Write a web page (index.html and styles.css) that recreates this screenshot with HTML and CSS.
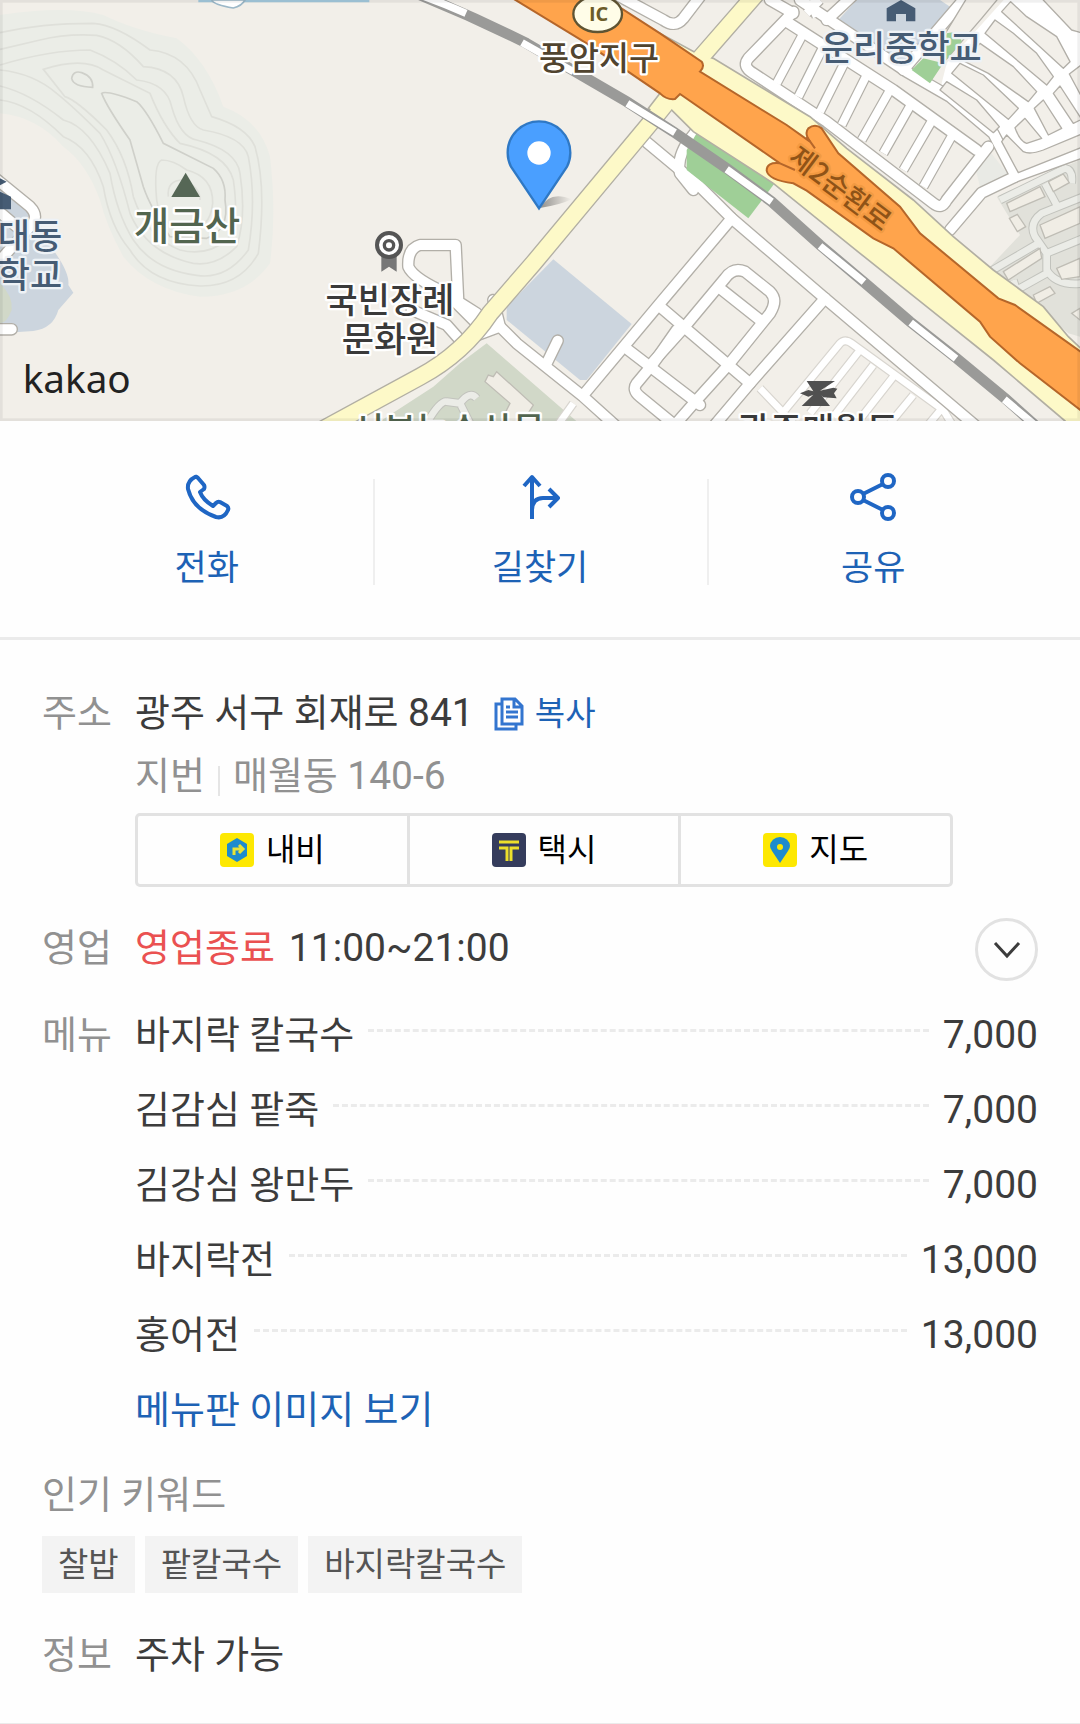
FILE: index.html
```html
<!DOCTYPE html>
<html lang="ko">
<head>
<meta charset="utf-8">
<meta name="viewport" content="width=device-width, initial-scale=1">
<title>장소 정보</title>
<link rel="stylesheet" href="styles.css">
</head>
<body>
<main class="place">
  <svg class="map" viewBox="0 0 3240 1263" preserveAspectRatio="xMidYMid slice" role="img" aria-label="지도">
    <defs>
      <linearGradient id="pin-shadow"><stop offset="0" stop-opacity=".4"/><stop offset="1" stop-opacity="0"/></linearGradient>
      <g id="main-roads">
        <path d="M-60 410L120 560L215 655L495 895L950 1280"/>
        <path d="M215 655L0 910L-230 1185"/>
        <path d="M-500 960L-430 1030L-230 1190L-130 1280"/>
        <path d="M495 895L270 1150L160 1280"/>
        <path d="M0 920L270 1150"/>
        <path d="M-20 1085L70 985L195 835Q220 800 255 815L330 875Q355 900 330 940L205 1095L110 1200L40 1280"/>
        <path d="M180 865L300 960"/>
        <path d="M-95 1050L120 1215"/>
        <path d="M50 990L-20 1090L-70 1150Q-85 1170 -60 1190L50 1280"/>
        <path d="M-340 1090L-307 1022"/>
        <path d="M100 570L60 520Q50 480 80 430L115 385"/>
        <path d="M-550 940L-605 905L-613 735L-720 735Q-758 745 -755 800Q-740 835 -640 880L-560 960L-530 970"/>
        <path d="M-745 930L-640 975L-600 1020"/>
        <path d="M-500 900L-480 980L-560 1010"/>
        <path d="M-120 -10L10 60Q45 85 70 55L120 -10"/>
        <path d="M420 0L740 215L870 290L1000 400L1065 525"/>
        <path d="M380 65L700 270L950 450"/>
        <path d="M400 35L265 175Q245 200 280 220L500 365L820 610Q845 630 860 600L985 440"/>
        <path d="M330 0L400 40"/>
        <path d="M500 60L575 -10"/>
        <path d="M730 210L910 0"/>
        <path d="M1065 530L965 578L870 690"/>
        <path d="M1065 530L1270 455"/>
      </g>
      <g id="side-roads">
        <path d="M430 100L350 250M490 140L415 290M555 185L480 335M620 225L545 375M690 270L605 420M755 310L670 460M820 355L730 510M880 400L790 560"/>
        <path d="M440 40L480 0M450 1L470 50"/>
      </g>
      <g id="lanes">
        <path d="M375 1230L540 1030Q555 1015 575 1030L850 1230L880 1280M600 1050L450 1240M640 1095L520 1250M700 1130L590 1270M760 1185L690 1270M300 1165L400 1270M850 1220L800 1280"/>
        <path d="M-260 1210L-310 1280"/>
      </g>
      <g id="estate-roads">
        <path d="M1020 600L1215 505Q1240 510 1235 550M1155 550L1190 615M1270 590L1145 640Q1105 670 1125 710L1160 760V810Q1190 860 1270 850M990 815L1135 730M1060 840L1070 870L1160 820M1160 760L1270 715"/>
        <path d="M-700 1270Q-660 1200 -640 1205L-600 1210Q-570 1170 -550 1195M-600 1210L-570 1270"/>
      </g>
    </defs>
    <rect class="ground" width="3240" height="1263"/>

    <!-- hill and its contour lines -->
    <path class="hill" d="M0 45Q200 15 310 45Q400 90 530 115Q620 180 670 320Q780 360 810 470Q830 640 810 790Q740 890 600 890Q450 870 370 770Q320 680 300 600Q260 490 190 440Q110 350 0 340Z"/>
    <g class="contour">
      <path d="M0 98Q120 70 280 70Q350 75 450 150Q560 160 600 270L635 350Q740 380 765 440Q800 560 775 760Q720 860 600 858Q450 850 390 750Q330 680 310 560Q270 440 190 410Q90 310 0 300"/>
      <path d="M0 148L120 120Q200 100 290 106Q360 120 430 200Q530 205 550 290Q570 380 610 390Q730 410 745 470Q770 600 745 750Q680 840 590 826Q460 810 400 720Q350 640 330 520Q270 380 190 360Q90 280 0 258"/>
      <path d="M0 195Q150 150 270 150Q350 180 410 240Q500 250 515 320Q540 410 590 420Q710 450 720 520Q740 650 710 740Q650 800 580 790Q440 760 390 640Q350 480 300 400Q220 320 170 280Q100 220 0 210"/>
      <path d="M130 208Q250 170 310 210L450 280Q490 380 540 430Q680 460 700 540Q720 680 680 720Q620 770 540 750Q440 710 400 590Q380 470 320 390Q230 300 195 290Z"/>
      <path class="contour-dark" d="M305 280Q320 270 410 305Q440 330 490 430L640 505Q680 540 675 600Q690 690 620 715L510 710Q450 620 430 560L390 420Q320 320 305 280ZM215 235Q220 210 245 218Q280 230 278 262Q220 260 215 235Z"/>
      <path d="M470 600Q460 490 485 480Q520 480 560 510Q640 530 638 610Q630 690 560 690Q480 680 470 600ZM505 590Q500 540 550 540Q600 560 600 600"/>
    </g>

    <!-- campus at the left edge -->
    <path class="lot" d="M0 550L110 650L160 750Q210 820 205 855L220 878L175 930Q160 985 100 993L0 1000Z"/>
    <path class="park-soft" d="M0 850Q40 890 35 930Q20 970 0 970Z"/>
    <path class="road-case" d="M-20 530L90 620Q120 650 90 680L10 770M-20 620L50 680M-20 988H35"/>
    <path class="road-fill" d="M-20 530L90 620Q120 650 90 680L10 770M-20 620L50 680M-20 988H35"/>
    <path class="navy" d="M0 535L20 545L0 556ZM0 575L33 590V628H0Z"/>
    <path class="water" d="M595 0H1108V7H595Z"/>
    <path class="pond" d="M635 0Q640 14 700 24Q725 18 735 0Z"/>

    <g transform="translate(1980 0)">
      <path class="lot" d="M530 65L590 0H840L870 20L740 200Z"/>
      <path class="lot" d="M-320 778L-85 972L-220 1140H-240L-460 960V920Z"/>
      <path class="park-soft" d="M-520 1030L-220 1290H-880L-680 1160L-600 1090Z"/>
      <path class="estate" d="M1010 590L1260 480V1010L1225 1000L990 800L1080 705Z"/>
      <path class="estate-soft" d="M945 500L990 455L1050 530L960 560Z"/>
      <use href="#lanes" class="lane-case"/><use href="#lanes" class="lane-fill"/>
      <use href="#estate-roads" class="estate-case"/><use href="#estate-roads" class="estate-fill"/>
      <path class="building" d="M1040 610L1140 560L1155 590L1050 635ZM1165 545L1210 522L1228 548L1180 575ZM1048 655L1072 643L1097 680L1072 695ZM1140 675L1260 620V670L1155 715ZM1030 815L1140 745L1145 775L1045 840ZM1190 805L1260 775V830L1205 838ZM1120 885L1170 860L1185 880L1130 910ZM1235 940L1260 925V960Z"/>
      <path class="building" d="M-525 1145L-515 1125L-500 1130L-490 1115L-380 1215L-415 1270H-480L-450 1210Z"/>
      <path class="white" d="M840 270L860 190L1040 -10H1270V460L1065 525L1000 410Z"/>
      <use href="#side-roads" class="side-case"/><use href="#main-roads" class="road-case"/>
      <use href="#side-roads" class="side-fill"/><use href="#main-roads" class="road-fill"/>

      <!-- housing blocks between the school and the east edge -->
      <path class="block" d="M1052 5L1025 35L1210 205L1230 185L1190 110L1100 50ZM1005 60L975 100L1160 255L1180 230L1130 160L1060 100ZM960 130L915 185L985 220L1105 305L1130 275L1060 200ZM900 190L875 220L1045 358L1075 325L970 225ZM860 245L840 270L1000 398L1018 380L950 300ZM1095 355L1065 383Q1080 425 1100 430L1145 415ZM1150 300L1123 325L1165 405L1205 385ZM1200 258L1180 280L1240 370L1265 358ZM1228 222L1270 190V300ZM1040 405L1025 425L1075 518L1270 440V400L1150 450Q1110 465 1090 455ZM1145 -5L1235 90L1270 100V-5ZM920 -5H1015L965 55L840 200L850 110Z"/>
      <path class="park" d="M110 400L345 548L265 655L80 510V450Z"/>
      <path class="park" d="M755 210L790 175L850 190L810 250ZM860 100Q900 90 905 125L845 195L835 180Z"/>

      <!-- arterial roads -->
      <path class="artery-case" d="M-1060 1315L-720 1130Q-590 1060 -510 940L-380 790L-30 370L50 270M120 175L290 -20"/>
      <path class="artery-strip" d="M0 280L0 100L110 160L160 175L450 350L560 445L760 600L880 710L1000 810L1150 920L1225 1010L1300 1080V1340L1215 1263L1000 1080L800 920L600 760L340 550L100 395L30 325L0 355L-35 325Z"/>
      <path class="artery-fill" d="M-1060 1315L-720 1130Q-590 1060 -510 940L-380 790L-30 370L50 270M120 175L290 -20"/>

      <!-- railway -->
      <path class="rail" d="M-720 -15Q-560 50 -400 130L-100 305L40 395L200 505L335 605L480 735L610 845L750 965L890 1075L1035 1195L1130 1280"/>
      <path class="rail-gap" d="M-720 -15Q-650 10 -582 40M-414 128L-260 215M-98 310L45 398M200 508L335 605M480 738L612 846M752 968L888 1076M1033 1198L1130 1280"/>

      <path class="highway" d="M-450 -10L-220 130L0 280Q20 300 45 297L60 282L360 490Q320 485 320 512Q325 540 400 550L440 572L640 715L700 745L960 965L990 1010L1080 1090L1280 1245V1068L1065 915L1015 895L780 700L720 620L535 460L485 385Q465 370 445 385Q432 400 450 425L380 375L120 215Q135 200 125 185L0 100L-170 -10Z"/>
      <path class="highway-edge" d="M360 490L405 510M440 410L465 445"/>
      <g class="label label-road"><text transform="translate(380 482) rotate(37)">제2순환로</text></g>
      <path class="navy" d="M680 25V64H708V42H738V64H766V25L723 0Z"/>
      <text class="label label-navy" x="724" y="184">운리중학교</text>
      <path class="ink" d="M440 1143H525L480 1172L520 1163L532 1166L522 1180L530 1195L490 1192L484 1186L510 1218H425L460 1184L445 1190L420 1180L445 1170L460 1174Z"/>
      <text class="label" x="475" y="1330">광주매월동</text>
    </g>

    <g transform="translate(900 0)">
      <ellipse class="badge" cx="893" cy="42" rx="73" ry="54"/>
      <text class="badge-text" x="896" y="64">IC</text>
      <text class="label label-brown" x="897" y="210">풍암지구</text>
      <path class="shadow" d="M720 624Q750 570 815 598Q780 615 720 624Z"/>
      <path class="pin" d="M717 625L633 500Q623 480 623 458A94 94 0 0 1 811 458Q811 480 801 500Z"/>
      <circle class="white" cx="717" cy="459" r="35"/>
      <path class="medal-tail" d="M244 765H290V815L267 800L244 815Z"/>
      <circle class="medal" cx="267" cy="735" r="36"/>
      <circle class="medal-core" cx="267" cy="736" r="14"/>
      <text class="label" x="270" y="938">국빈장례</text>
      <text class="label" x="270" y="1056">문화원</text>
      <text class="label label-green" x="445" y="1328">서부농수산물</text>
    </g>

    <path class="peak" d="M557 518L600 591H514Z"/>
    <text class="label label-green label-peak" x="561" y="720">개금산</text>
    <text class="label label-navy" x="90" y="748">대동</text>
    <text class="label label-navy" x="90" y="864">학교</text>
    <text class="brand" x="68" y="1180">kakao</text>
    <rect class="frame" x="4" y="4" width="3232" height="1255"/>
  </svg>

  <nav class="actions" aria-label="바로가기">
    <a class="action" href="#call">
      <svg viewBox="0 0 48 48" aria-hidden="true"><path d="M12 4Q4 8 5 16Q10 36 33 44Q41 46 45 37Q46 35 44 33L37 29Q35 28 33 30L30 33Q20 27 17 19L21 16Q22 14 21 12L15 5Q13 3 12 4Z"/></svg>
      <span>전화</span>
    </a>
    <a class="action" href="#route">
      <svg viewBox="0 0 48 48" aria-hidden="true"><path d="M16 46V5M8 13L16 4L24 13M16 38Q16 25 27 25H41M33 16L42 25L33 34"/></svg>
      <span>길찾기</span>
    </a>
    <a class="action" href="#share">
      <svg viewBox="0 0 48 48" aria-hidden="true"><circle cx="39" cy="8" r="6"/><circle cx="9" cy="24" r="6"/><circle cx="39" cy="40" r="6"/><path d="M14 21L34 11M14 27L34 37"/></svg>
      <span>공유</span>
    </a>
  </nav>

  <section class="info">
    <div class="row">
      <h2 class="name">주소</h2>
      <div class="value address">
        <p class="line"><span>광주 서구 회재로 <span class="num">841</span></span>
          <button class="copy" type="button">
            <svg viewBox="0 0 30 34" aria-hidden="true"><path d="M7 7H2V32H22V27M8 2H21L28 9V27H8ZM20 2V10H28M12 10H16M12 15H24M12 20H24"/></svg>복사</button>
        </p>
        <p class="line sub"><span>지번</span><span class="bar"></span><span>매월동 <span class="num">140-6</span></span></p>
        <div class="apps">
          <a class="app" href="#navi"><svg viewBox="0 0 34 34" aria-hidden="true"><rect class="yellow" width="34" height="34" rx="4"/><path class="blue" d="M17 5L27 11V23L17 29L7 23V11Z"/><path class="turn" d="M14 22V16H22M19 12L23 16L19 20"/></svg>내비</a>
          <a class="app" href="#taxi"><svg viewBox="0 0 34 34" aria-hidden="true"><rect class="dark" width="34" height="34" rx="4"/><path class="tee" d="M7 9H27M7 15H15V28M27 15H19V28"/></svg>택시</a>
          <a class="app" href="#map"><svg viewBox="0 0 34 34" aria-hidden="true"><rect class="yellow" width="34" height="34" rx="4"/><path class="blue" d="M17 30L9 18Q7 15 7 13A10 9 0 0 1 27 13Q27 15 25 18Z"/><circle class="yellow" cx="17" cy="14" r="3"/></svg>지도</a>
        </div>
      </div>
    </div>

    <div class="row hours">
      <h2 class="name">영업</h2>
      <p class="value time"><strong class="closed">영업종료</strong><span class="num">11:00~21:00</span></p>
      <button class="toggle" type="button" aria-label="영업시간 펼치기"><svg viewBox="0 0 28 18" aria-hidden="true"><path d="M2 2L14 15L26 2"/></svg></button>
    </div>

    <div class="row menu">
      <h2 class="name">메뉴</h2>
      <div class="value">
        <ul class="dishes">
          <li class="dish"><span>바지락 칼국수</span><i class="leader"></i><span class="num">7,000</span></li>
          <li class="dish"><span>김감심 팥죽</span><i class="leader"></i><span class="num">7,000</span></li>
          <li class="dish"><span>김강심 왕만두</span><i class="leader"></i><span class="num">7,000</span></li>
          <li class="dish"><span>바지락전</span><i class="leader"></i><span class="num">13,000</span></li>
          <li class="dish"><span>홍어전</span><i class="leader"></i><span class="num">13,000</span></li>
        </ul>
        <a class="more" href="#menu-images">메뉴판 이미지 보기</a>
      </div>
    </div>

    <div class="keywords">
      <h2 class="name">인기 키워드</h2>
      <ul class="tags"><li class="tag">찰밥</li><li class="tag">팥칼국수</li><li class="tag">바지락칼국수</li></ul>
    </div>

    <div class="row extra">
      <h2 class="name">정보</h2>
      <p class="value">주차 가능</p>
    </div>
  </section>
</main>
</body>
</html>
```

FILE: styles.css
```css
* { box-sizing: border-box; }
body {
  margin: 0;
  background: #fefefe;
  color: #3c3c3c;
  font: 38px/60px Roboto, "Noto Sans CJK KR", sans-serif;
}
h2, p, ul { margin: 0; padding: 0; font: inherit; list-style: none; }
a { color: inherit; text-decoration: none; }
button { margin: 0; padding: 0; border: 0; background: none; font: inherit; cursor: pointer; }

/* map */
.map { display: block; width: 100%; aspect-ratio: 1080 / 421; }
.ground { fill: #f2efe9; }
.hill { fill: #ebede7; }
.contour { fill: none; stroke: #dfe0da; stroke-width: 5; }
.contour-dark { stroke: #cfd0ca; }
.lot { fill: #ccd5de; }
.park { fill: #9fcf97; }
.park-soft { fill: #d1d8c8; }
.estate { fill: #e1e1da; }
.estate-soft { fill: #e9eae5; }
.water { fill: #a5cbe0; }
.pond { fill: #fff; stroke: #9cb8c8; stroke-width: 5; }
.building { fill: #f0ede5; stroke: #bfbdb5; stroke-width: 4; }
.block { fill: #f2efe9; stroke: #b2afa8; stroke-width: 4; stroke-linejoin: round; }
.road-case, .side-case, .lane-case, .estate-case,
.road-fill, .side-fill, .lane-fill, .estate-fill { fill: none; stroke-linejoin: round; }
.road-case, .road-fill { stroke-linecap: round; }
.road-case { stroke: #b2afa8; stroke-width: 38; }
.road-fill { stroke: #fff; stroke-width: 30; }
.side-case { stroke: #b2afa8; stroke-width: 31; }
.side-fill { stroke: #fff; stroke-width: 24; }
.lane-case { stroke: #d8d5cf; stroke-width: 27; }
.lane-fill { stroke: #fff; stroke-width: 20; }
.estate-case { stroke: #c2c3bd; stroke-width: 26; }
.estate-fill { stroke: #ebece7; stroke-width: 20; }
.artery-case { fill: none; stroke: #b2afa3; stroke-width: 56; }
.artery-strip { fill: #fdf9c8; stroke: #b2afa3; stroke-width: 5; }
.artery-fill { fill: none; stroke: #fdf9c8; stroke-width: 48; }
.rail { fill: none; stroke: #9a9a98; stroke-width: 32; }
.rail-gap { fill: none; stroke: #fff; stroke-width: 22; }
.highway { fill: #ffa44c; stroke: #b5662a; stroke-width: 6; }
.highway-edge { fill: none; stroke: #b5662a; stroke-width: 6; }
.navy { fill: #465c74; }
.ink { fill: #505050; }
.peak { fill: #566756; }
.badge { fill: #fffde8; stroke: #5f5433; stroke-width: 7; }
.badge-text { font: 700 60px "Open Sans", sans-serif; fill: #6b5c28; text-anchor: middle; }
.shadow { fill: url(#pin-shadow); }
.pin { fill: #4a9fff; stroke: #2f78c4; stroke-width: 7; }
.white { fill: #fff; }
.medal { fill: #fff; stroke: #555; stroke-width: 12; }
.medal-core { fill: #fff; stroke: #555; stroke-width: 10; }
.medal-tail { fill: #777; }
.label {
  font: 500 105px "Noto Sans CJK KR", sans-serif;
  fill: #3a3a3a;
  text-anchor: middle;
  stroke: #fff;
  stroke-width: 14;
  stroke-linejoin: round;
  paint-order: stroke;
}
.label-brown { font-size: 98px; fill: #51442f; }
.label-navy { fill: #465c74; stroke: #eef2f6; }
.label-green { fill: #52654f; }
.label-peak { font-size: 116px; }
.label-road { font-size: 84px; fill: #8f5317; stroke: #f29a42; text-anchor: start; }
.brand { font: 116px "Noto Sans", sans-serif; fill: #222; }
.frame { fill: none; stroke: #000; stroke-opacity: .06; stroke-width: 8; }

/* shortcuts */
.actions {
  display: flex;
  align-items: center;
  padding: 52px 40px 46px;
  border-bottom: 3px solid #ebebeb;
}
.action {
  position: relative;
  flex: 1;
  display: flex;
  flex-direction: column;
  align-items: center;
  gap: 26px;
  color: #1d62b5;
  font-size: 35px;
  line-height: 44px;
}
.action + .action::before {
  content: "";
  position: absolute;
  left: 0;
  top: 6px;
  bottom: 6px;
  width: 2px;
  background: #efefef;
}
.action svg { width: 48px; height: 48px; fill: none; stroke: #1f66c4; stroke-width: 4; stroke-linejoin: round; }

/* details */
.info { padding: 42px 42px 38px; border-bottom: 1px solid #ebebeb; }
.row { display: flex; align-items: flex-start; }
.name { flex: none; min-width: 93px; color: #919191; }
.value { flex: 1; min-width: 0; }
.num { font-size: 39px; line-height: 1; }
.row:first-child .name, .line { line-height: 63px; }
.line { display: flex; align-items: center; height: 63px; }
.copy { display: inline-flex; align-items: center; gap: 11px; margin-left: 20px; color: #1d62b5; font-size: 33px; }
.copy svg { width: 30px; height: 34px; fill: none; stroke: #3375cf; stroke-width: 3; }
.sub { gap: 13px; color: #919191; }
.bar { width: 2px; height: 30px; align-self: flex-end; margin-bottom: 12px; background: #e5e5e5; }
.apps {
  display: flex;
  margin: 5px 85px 0 0;
  border: 3px solid #e2e2e2;
  border-radius: 5px;
}
.app {
  flex: 1;
  display: flex;
  align-items: center;
  justify-content: center;
  gap: 12px;
  color: #000;
  font-size: 32px;
  line-height: 68px;
}
.app + .app { border-left: 3px solid #e2e2e2; }
.app svg { width: 34px; height: 34px; }
.yellow { fill: #fde802; }
.dark { fill: #353c5c; }
.blue { fill: #1e8bcd; }
.turn { fill: none; stroke: #e8e337; stroke-width: 3; }
.tee { fill: none; stroke: #ecdf2b; stroke-width: 3; }

.hours { margin-top: 31px; }
.time { display: flex; align-items: baseline; gap: 14px; }
.closed { color: #ea5151; font-weight: 400; }
.toggle {
  display: grid;
  place-items: center;
  width: 63px;
  height: 63px;
  border: 3px solid #e2e2e2;
  border-radius: 50%;
}
.toggle svg { width: 28px; height: 18px; fill: none; stroke: #3c3c3c; stroke-width: 3; }

.menu { margin-top: 17px; line-height: 75px; }
.dish { display: flex; align-items: baseline; }
.leader { flex: 1; align-self: center; margin: 0 14px 11px; border-top: 3px dashed #ebebeb; }
.more { display: block; color: #1d62b5; }

.keywords { margin-top: 17px; }
.tags { display: flex; flex-wrap: wrap; gap: 10px; margin-top: 11px; }
.tag { padding: 0 16px; background: #f3f3f3; color: #555; font-size: 33px; line-height: 57px; }
.extra { margin-top: 32px; }
```
